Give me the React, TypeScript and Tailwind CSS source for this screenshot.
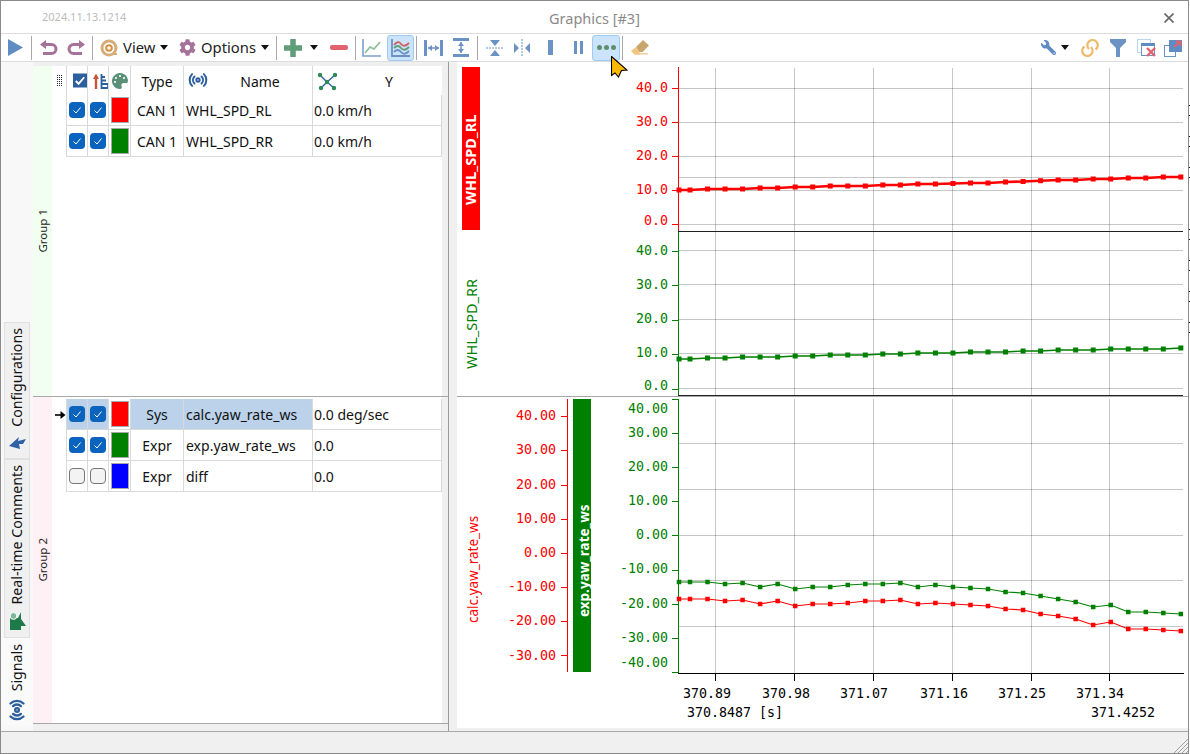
import React from "react";
import { FaCog, FaWrench, FaPalette } from "react-icons/fa";
import { Radio } from "lucide-react";

const XS = [679, ...Array.from({ length: 29 }, (_, i) => 690 + i * 17.53)];
const R1 = [190,190,189,189,189,188,188,187,187,186,186,186,185,185,184,184,183.5,183,183,182,181.5,180.7,180,180,179,179,178,178,177,177];
const G1 = [359,359,358,358,357,357,357,356,356,355,355,355,354,354,353,353,353,352,352,352,351,351,350,350,350,349,349,349,349,348];
const G3 = [582,582,582,584,583,587,584,589,587,587,585,584,584,583,587,585,587,588,589,592,593,596,599,602,607,605,612,612,613,614];
const R3 = [599,599,599,601,600,604,601,606,604,604,603,601,601,600,604,603,604,605,606,609,610,614,616,619,625,622,629,629,630,631];
const VX = [715, 794, 873, 952, 1031, 1109];
const GRID = "rgba(0,0,0,0.22)";
const RED = "#ff0000";
const GREEN = "#008000";
const MONO = "font-['DejaVu_Sans_Mono',monospace] text-[13.3px]";

function Series({ ys, color, w, m = 5 }: { ys: number[]; color: string; w: number; m?: number }) {
  return (
    <g>
      <polyline points={XS.map((x, i) => `${x},${ys[i]}`).join(" ")} fill="none" stroke={color} strokeWidth={w} />
      {XS.map((x, i) => (
        <rect key={i} x={x - m / 2} y={ys[i] - m / 2} width={m} height={m} fill={color} />
      ))}
    </g>
  );
}

function Grid({ ys, y1, y2 }: { ys: number[]; y1: number; y2: number }) {
  return (
    <g stroke={GRID} strokeWidth="1">
      {VX.map((x) => (
        <line key={x} x1={x + 0.5} x2={x + 0.5} y1={y1} y2={y2} />
      ))}
      {ys.map((y) => (
        <line key={y} x1={678} x2={1183} y1={y + 0.5} y2={y + 0.5} />
      ))}
    </g>
  );
}

function YAxis({ x, y1, y2, color, ticks, labels, right }: { x: number; y1: number; y2: number; color: string; ticks: number[]; labels: [string, number][]; right: number }) {
  return (
    <g>
      <line x1={x + 0.5} x2={x + 0.5} y1={y1} y2={y2} stroke={color} strokeWidth="1" />
      {ticks.map((t) => (
        <line key={t} x1={x - 6} x2={x} y1={t + 0.5} y2={t + 0.5} stroke={color} strokeWidth="1" />
      ))}
      {labels.map(([s, y]) => (
        <text key={s} x={right} y={y + 5} textAnchor="end" fill={color} className={MONO}>
          {s}
        </text>
      ))}
    </g>
  );
}

function Plot1() {
  return (
    <svg viewBox="457 67 731 165" className="block w-[731px] h-[165px] shrink-0">
      <Grid ys={[88, 122, 156, 177, 190, 224]} y1={68} y2={231} />
      <YAxis x={678} y1={67} y2={231} color={RED} ticks={[88, 122, 156, 190, 224]} right={668}
        labels={[["40.0", 87], ["30.0", 121], ["20.0", 155], ["10.0", 189], ["0.0", 220]]} />
      <rect x={462} y={67} width={18} height={163} fill={RED} />
      <text transform="rotate(-90 476 205)" x={476} y={205} fill="#fff" className="font-['Noto_Sans',sans-serif] text-[14.5px] font-bold">WHL_SPD_RL</text>
      <Series ys={R1} color={RED} w={2.6} />
      <line x1={678} x2={1183} y1={231.5} y2={231.5} stroke="#222" strokeWidth="1" />
    </svg>
  );
}

function Plot2() {
  return (
    <svg viewBox="457 232 731 164" className="block w-[731px] h-[164px] shrink-0">
      <Grid ys={[250, 284, 319, 353, 388]} y1={232} y2={395} />
      <YAxis x={678} y1={232} y2={395} color={GREEN} ticks={[251, 285, 320, 354, 389]} right={668}
        labels={[["40.0", 250], ["30.0", 284], ["20.0", 318], ["10.0", 352], ["0.0", 385]]} />
      <text transform="rotate(-90 477 369)" x={477} y={369} fill={GREEN} className="font-['Noto_Sans',sans-serif] text-[14.5px]">WHL_SPD_RR</text>
      <Series ys={G1} color={GREEN} w={1.4} />
      <line x1={678} x2={1183} y1={395.5} y2={395.5} stroke="#222" strokeWidth="1" />
    </svg>
  );
}

function Plot3() {
  return (
    <svg viewBox="457 399 731 329" className="block w-[731px] h-[329px] shrink-0">
      <Grid ys={[443, 489, 535, 580, 626]} y1={399} y2={673} />
      <YAxis x={567} y1={399} y2={672} color={RED} ticks={[416, 450, 485, 519, 553, 587, 621, 655]} right={556}
        labels={[["40.00", 415], ["30.00", 449], ["20.00", 484], ["10.00", 518], ["0.00", 552], ["-10.00", 586], ["-20.00", 620], ["-30.00", 655]]} />
      <rect x={573} y={399} width={18} height={273} fill={GREEN} />
      <text transform="rotate(-90 589 617)" x={589} y={617} fill="#fff" className="font-['Noto_Sans',sans-serif] text-[13.5px] font-bold">exp.yaw_rate_ws</text>
      <text transform="rotate(-90 478 623)" x={478} y={623} fill={RED} className="font-['Noto_Sans',sans-serif] text-[13.5px]">calc.yaw_rate_ws</text>
      <YAxis x={678} y1={399} y2={673} color={GREEN} ticks={[399, 433, 467, 501, 535, 570, 604, 638, 672]} right={668}
        labels={[["40.00", 408], ["30.00", 432], ["20.00", 466], ["10.00", 500], ["0.00", 534], ["-10.00", 568], ["-20.00", 603], ["-30.00", 637], ["-40.00", 662]]} />
      <Series ys={G3} color={GREEN} w={1.2} m={4.5} />
      <Series ys={R3} color={RED} w={1.2} m={4.5} />
      <line x1={678} x2={1184} y1={673.5} y2={673.5} stroke="#000" strokeWidth="1" />
      {VX.map((x) => (
        <line key={x} x1={x + 0.5} x2={x + 0.5} y1={673} y2={681} stroke="#000" strokeWidth="1" />
      ))}
      {[["370.89", 683], ["370.98", 762], ["371.07", 840], ["371.16", 920], ["371.25", 998], ["371.34", 1076]].map(([s, x]) => (
        <text key={s as string} x={x as number} y={698} fill="#000" className={MONO}>{s}</text>
      ))}
      <text x={687} y={717} fill="#000" className={MONO}>370.8487 [s]</text>
      <text x={1091} y={717} fill="#000" className={MONO}>371.4252</text>
    </svg>
  );
}

function Check({ on }: { on: boolean }) {
  return on ? (
    <div className="w-4 h-4 rounded-[4px] bg-[#0a63bd] flex items-center justify-center">
      <svg viewBox="0 0 16 16" className="w-4 h-4">
        <path d="M4.5 8.5 L7 11 L11.5 5.5" fill="none" stroke="#fff" strokeWidth="1" />
      </svg>
    </div>
  ) : (
    <div className="w-4 h-4 rounded-[4px] bg-[#f3f3f3] border border-[#777]" />
  );
}

const CELL = "border-r border-b border-[#d9d9d9] flex items-center";

function Row({ on, color, type, name, val, sel }: { on: boolean; color: string; type: string; name: string; val: string; sel?: boolean }) {
  const bg = sel ? "bg-[#bbd2ea]" : "bg-white";
  return (
    <div className="flex h-[31px] w-[390px]">
      <div className="w-[14px] flex items-center justify-center">
        {sel && (
          <svg viewBox="0 0 11 10" className="w-[11px] h-[10px] ml-[2px]">
            <path d="M0 5 H8" stroke="#000" strokeWidth="1.6" />
            <path d="M5.5 1 L10.5 5 L5.5 9 Z" fill="#000" />
          </svg>
        )}
      </div>
      <div className="border-l border-[#d9d9d9] grid grid-cols-[21px_21px_22px_53px_129px_129px] w-[376px]">
        <div className={`${CELL} ${bg} justify-center`}><Check on={on} /></div>
        <div className={`${CELL} ${bg} justify-center`}><Check on={on} /></div>
        <div className={`${CELL} justify-center bg-white`}>
          <div className="w-[18px] h-[26px] border border-[#a8a8a8]" style={{ backgroundColor: color }} />
        </div>
        <div className={`${CELL} ${bg} justify-center pt-px`}>{type}</div>
        <div className={`${CELL} ${bg} pl-[2px] pt-px`}>{name}</div>
        <div className={`${CELL} pl-px pt-px`}>{val}</div>
      </div>
    </div>
  );
}

function Header() {
  return (
    <div className="flex h-[29px] w-[390px]">
      <div className="w-[14px] flex items-center justify-center">
        <svg viewBox="0 0 6 12" className="w-[6px] h-[12px] ml-[1px]">
          {[0.5, 2.5, 4.5, 6.5, 8.5, 10.5].map((y) => (
            <line key={y} x1="0" x2="6" y1={y} y2={y} stroke="#222" strokeDasharray="1 1" />
          ))}
        </svg>
      </div>
      <div className="border-l border-[#d9d9d9] grid grid-cols-[21px_21px_22px_53px_129px_129px] w-[376px]">
        <div className="border-r border-[#d9d9d9] flex items-center pl-[6px]">
          <svg viewBox="0 0 15 15" className="w-[15px] h-[15px]">
            <rect width="15" height="15" fill="#2c5f9e" />
            <path d="M3 8 L6 11 L12 4" fill="none" stroke="#fff" strokeWidth="2" />
          </svg>
        </div>
        <div className="border-r border-[#d9d9d9] flex items-center pl-[5px]">
          <svg viewBox="0 0 15 16" className="w-[15px] h-[16px]">
            <path d="M3 16 V5" stroke="#c8553d" strokeWidth="2.4" />
            <path d="M0 6 L3 0.5 L6 6 Z" fill="#c8553d" />
            <path d="M8.5 1 V15 H15 V11 M8.5 4 H12 M8.5 7.5 H13 M8.5 11 H15" fill="none" stroke="#2c5f9e" strokeWidth="1.8" />
          </svg>
        </div>
        <div className="border-r border-[#d9d9d9] flex items-center justify-center">
          <FaPalette size={16} color="#5a9078" />
        </div>
        <div className="border-r border-[#d9d9d9] flex items-center justify-center pt-[2px]">Type</div>
        <div className="border-r border-[#d9d9d9] flex items-center relative justify-center pl-[24px] pt-[2px]">
          <span className="absolute left-[4px] top-[4px]"><Radio size={20} color="#2c5f9e" strokeWidth={2.4} /></span>
          Name
        </div>
        <div className="border-r border-transparent flex items-center relative justify-center pl-[24px] pt-[2px]">
          <svg viewBox="0 0 21 19" className="absolute left-[4px] top-[6px] w-[21px] h-[19px]">
            <path d="M3 3 L10 10 L18 3 M10 10 L4 16 M10 10 L17 16" stroke="#2c5f9e" strokeWidth="1.4" fill="none" />
            {[[3, 3], [18, 3], [10, 10], [4, 16], [17, 16]].map(([x, y]) => (
              <circle key={`${x}-${y}`} cx={x} cy={y} r="2.2" fill="#2f8a5a" />
            ))}
          </svg>
          Y
        </div>
      </div>
    </div>
  );
}

function Sep({ className }: { className: string }) {
  return <div className={`w-px h-[24px] bg-[#a8a8a8] shrink-0 ${className}`} />;
}

function Caret() {
  return (
    <svg viewBox="0 0 8 5" className="w-2 h-[5px] shrink-0">
      <path d="M0 0 H8 L4 5 Z" fill="#111" />
    </svg>
  );
}

function Btn({ className, children }: { className: string; children?: React.ReactNode }) {
  return <div className={`h-[26px] flex items-center justify-center shrink-0 ${className}`}>{children}</div>;
}

const ACTIVE = "bg-[#cce4fb] border border-[#9ccbf5] rounded-[3px]";
const BLUE = "#6a93c4";

function Toolbar() {
  return (
    <div className="relative h-[28px] shrink-0 border-b border-[#dcdcdc] flex items-center pr-[2px] text-[14.8px] text-[#222]">
      <Btn className="w-[29px]">
        <svg viewBox="0 0 15 17" className="w-[15px] h-[17px]"><path d="M0 0 L15 8.5 L0 17 Z" fill="#5f8cc2" /></svg>
      </Btn>
      <Sep className="ml-px" />
      <Btn className="w-[27px] ml-[3px]">
        <svg viewBox="0 0 18 16" className="w-[18px] h-4">
          <path d="M4 4.5 H11.5 A4.5 4.5 0 0 1 11.5 13.5 H3" fill="none" stroke="#a5729a" strokeWidth="3" />
          <path d="M0 4.5 L6 0 V9 Z" fill="#a5729a" />
        </svg>
      </Btn>
      <Btn className="w-[27px]">
        <svg viewBox="0 0 18 16" className="w-[18px] h-4">
          <path d="M14 4.5 H6.5 A4.5 4.5 0 0 0 6.5 13.5 H15" fill="none" stroke="#a5729a" strokeWidth="3" />
          <path d="M18 4.5 L12 0 V9 Z" fill="#a5729a" />
        </svg>
      </Btn>
      <Sep className="ml-[3px]" />
      <div className="ml-[7px] w-[70px] flex items-center gap-[5px] shrink-0">
        <svg viewBox="0 0 18 18" className="w-[18px] h-[18px] shrink-0">
          <circle cx="9" cy="9" r="7" fill="none" stroke="#d6ad78" strokeWidth="3" />
          <circle cx="9" cy="9" r="2.8" fill="none" stroke="#d98f3e" strokeWidth="2" />
          <path d="M12 15 L17 15" stroke="#d6ad78" strokeWidth="2" />
        </svg>
        <span>View</span>
        <Caret />
      </div>
      <div className="ml-[9px] w-[90px] flex items-center gap-[5px] shrink-0">
        <FaCog size={17} color="#a5729a" className="shrink-0" />
        <span>Options</span>
        <Caret />
      </div>
      <Sep className="ml-[7px]" />
      <Btn className="w-[18px] ml-[7px]">
        <svg viewBox="0 0 18 18" className="w-[18px] h-[18px]">
          <path d="M9 0 V18 M0 9 H18" stroke="#5f9e78" strokeWidth="5.5" />
        </svg>
      </Btn>
      <Btn className="w-[8px] ml-[8px]"><Caret /></Btn>
      <Btn className="w-[18px] ml-[12px]"><div className="w-[18px] h-[5px] rounded-[2px] bg-[#e2626f]" /></Btn>
      <Sep className="ml-[7px]" />
      <Btn className="w-[26px] ml-[3px]">
        <svg viewBox="0 0 20 20" className="w-5 h-5">
          <path d="M1 1 V18 H19" fill="none" stroke="#7ba0cc" strokeWidth="1.6" />
          <path d="M3 15 L8 9 L12 11 L18 4" fill="none" stroke="#8fbf9c" strokeWidth="1.8" />
        </svg>
      </Btn>
      <Btn className={`w-[27px] ml-[2px] ${ACTIVE}`}>
        <svg viewBox="0 0 20 20" className="w-5 h-5">
          <path d="M1 1 V18 H19" fill="none" stroke="#6a93c4" strokeWidth="1.8" />
          <path d="M3 7 Q7 2 10 6 T18 5" fill="none" stroke="#cf5f5f" strokeWidth="1.8" />
          <path d="M3 10 Q7 6 10 10 T18 9" fill="none" stroke="#5f9e78" strokeWidth="1.8" />
          <path d="M3 14 Q7 10 10 14 T18 13" fill="none" stroke="#6a93c4" strokeWidth="1.8" />
        </svg>
      </Btn>
      <Sep className="ml-[2px]" />
      <Btn className="w-[27px] ml-[3px]">
        <svg viewBox="0 0 19 16" className="w-[19px] h-4">
          <path d="M1.5 0 V16 M17.5 0 V16" stroke={BLUE} strokeWidth="3" />
          <path d="M4 8 H15" stroke={BLUE} strokeWidth="1.5" />
          <path d="M4 8 L8 5 V11 Z M15 8 L11 5 V11 Z" fill={BLUE} />
        </svg>
      </Btn>
      <Btn className="w-[27px]">
        <svg viewBox="0 0 16 19" className="w-4 h-[19px]">
          <path d="M0 1.5 H16 M0 17.5 H16" stroke={BLUE} strokeWidth="3" />
          <path d="M8 4 V15" stroke={BLUE} strokeWidth="1.5" />
          <path d="M8 4 L5 8 H11 Z M8 15 L5 11 H11 Z" fill={BLUE} />
        </svg>
      </Btn>
      <Sep className="ml-[3px]" />
      <Btn className="w-[27px] ml-[3px]">
        <svg viewBox="0 0 18 18" className="w-[18px] h-[18px]">
          <path d="M0 9 H18" stroke={BLUE} strokeWidth="1" strokeDasharray="2 1" />
          <path d="M4 1 H14 L9 7 Z M4 17 H14 L9 11 Z" fill={BLUE} />
        </svg>
      </Btn>
      <Btn className="w-[27px]">
        <svg viewBox="0 0 18 18" className="w-[18px] h-[18px]">
          <path d="M9 0 V18" stroke={BLUE} strokeWidth="1" strokeDasharray="2 1" />
          <path d="M1 4 V14 L6 9 Z M17 4 V14 L12 9 Z" fill={BLUE} />
        </svg>
      </Btn>
      <Btn className="w-[28px] ml-px"><div className="w-[5px] h-[15px] bg-[#6a93c4]" /></Btn>
      <Btn className="w-[28px] gap-[3px]">
        <div className="w-[3px] h-[13px] bg-[#6a93c4]" />
        <div className="w-[3px] h-[13px] bg-[#6a93c4]" />
      </Btn>
      <Btn className={`w-[28px] gap-[2px] ${ACTIVE}`}>
        <div className="w-[5px] h-[5px] rounded-full bg-[#5f8f70]" />
        <div className="w-[5px] h-[5px] rounded-full bg-[#5f8f70]" />
        <div className="w-[5px] h-[5px] rounded-full bg-[#5f8f70]" />
      </Btn>
      <Sep className="ml-[2px]" />
      <Btn className="w-[26px] ml-[4px]">
        <svg viewBox="0 0 18 15" className="w-[18px] h-[15px]">
          <path d="M5 7 L12 0 L18 5.5 L11.5 12 H8 Z" fill="#c9a66b" />
          <path d="M0 11 L5 7 L8.5 12 V14.5 H3.5 Z" fill="#f0c684" />
          <path d="M3.5 13.2 H17 V14.5 H3.5 Z" fill="#f0c684" />
        </svg>
      </Btn>
      <div className="ml-auto flex items-center">
        <Btn className="w-[20px]"><span className="-scale-x-100"><FaWrench size={15} color="#5f8cc2" /></span></Btn>
        <Btn className="w-[8px] ml-[3px]"><Caret /></Btn>
        <Btn className="w-[26px] ml-[8px]">
          <svg viewBox="0 0 18 18" className="w-[18px] h-[18px]">
            <path d="M8 10 A5.2 5.2 0 1 1 14.5 10.5" fill="none" stroke="#eebb6c" strokeWidth="2.2" />
            <path d="M10 8 A5.2 5.2 0 1 1 3.5 7.5" fill="none" stroke="#eebb6c" strokeWidth="2.2" />
          </svg>
        </Btn>
        <Btn className="w-[28px] ml-px">
          <svg viewBox="0 0 16 18" className="w-4 h-[18px]"><path d="M0 0 H16 V3 L10 9 V18 H6 V9 L0 3 Z" fill="#6a93c4" /></svg>
        </Btn>
        <Btn className="w-[28px]">
          <svg viewBox="0 0 19 18" className="w-[19px] h-[18px]">
            <rect x="0.5" y="0.5" width="13" height="13" fill="none" stroke="#bcd6f2" />
            <rect x="4.5" y="4.5" width="13" height="12" fill="#fff" stroke="#6a93c4" />
            <rect x="4" y="4" width="14" height="3" fill="#5f8cc2" />
            <path d="M10 9 L18 17 M18 9 L10 17" stroke="#e2626f" strokeWidth="2.4" />
          </svg>
        </Btn>
        <Btn className="w-[26px]">
          <svg viewBox="0 0 18 18" className="w-[18px] h-[18px]">
            <rect x="0.5" y="6.5" width="11" height="11" fill="#fff" stroke="#6a93c4" />
            <rect x="5" y="1" width="13" height="12" fill="#5f8cc2" />
            <path d="M10 8 L16 3 M12 2.5 H16.5 V7" fill="none" stroke="#e2626f" strokeWidth="2" />
          </svg>
        </Btn>
      </div>
      <svg viewBox="0 0 17 22" className="absolute left-[610px] top-[22px] w-[17px] h-[22px] z-10">
        <path d="M0.5 0.5 L16 14 L10.5 14.5 L7.5 21 L4 17 L0.5 19.5 Z" fill="#fdb900" stroke="#000" strokeWidth="1.1" />
      </svg>
    </div>
  );
}

function Tab({ label, icon, className }: { label: string; icon: React.ReactNode; className: string }) {
  return (
    <div className={`flex flex-col items-center ${className}`}>
      <span className="[writing-mode:vertical-rl] rotate-180 text-[14.2px] leading-none text-[#111]">{label}</span>
      <div className="flex-1 flex items-center justify-center">{icon}</div>
    </div>
  );
}

function Tabs() {
  return (
    <div className="w-[32px] shrink-0 flex flex-col justify-end bg-[#f8f8f8] pb-[6px]">
      <Tab
        label="Configurations"
        className="h-[137px] w-[26px] ml-[3px] pt-[5px] bg-[#f0f0f0] border border-[#e0e0e0]"
        icon={
          <svg viewBox="0 0 17 13" className="w-[17px] h-[13px]">
            <path d="M0 10 L10 1 L9 5 L17 3 L14 8 L10 8 L11 13 Z" fill="#2f62a5" />
          </svg>
        }
      />
      <Tab
        label="Real-time Comments"
        className="h-[179px] w-[26px] ml-[3px] pt-[5px] bg-[#f0f0f0] border border-[#e0e0e0]"
        icon={
          <svg viewBox="0 0 17 18" className="w-[17px] h-[18px]">
            <path d="M1 6 H9 L12 0 V7 L17 14 L12 14 V18 H1 Z" fill="#1f7a4a" />
            <circle cx="4.5" cy="4" r="3.4" fill="#7fb59a" stroke="#fff" strokeWidth="1" />
          </svg>
        }
      />
      <Tab
        label="Signals"
        className="h-[87px] w-[32px] pt-[6px] bg-[#fafafa]"
        icon={<span className="rotate-90 mt-[4px]"><Radio size={22} color="#2c5f9e" strokeWidth={2.6} /></span>}
      />
    </div>
  );
}

function GroupLabel({ text, className }: { text: string; className: string }) {
  return (
    <div className={`w-[19px] shrink-0 flex items-center ${className}`}>
      <span className="[writing-mode:vertical-rl] rotate-180 text-[11.5px] leading-none text-[#222] ml-[4px]">{text}</span>
    </div>
  );
}

export default function App() {
  return (
    <div className="w-[1190px] h-[754px] flex bg-white font-['Noto_Sans',sans-serif] text-[14px] text-[#111] overflow-hidden">
      <div className="w-[1189px] h-[754px] border border-[#8a8a8a] flex flex-col shrink-0">
        <div className="h-[33px] shrink-0 border-b border-[#dcdcdc] grid grid-cols-[1fr_auto_1fr] items-center">
          <div className="pl-[41px] text-[11px] text-[#bcbcbc]">2024.11.13.1214</div>
          <div className="text-[14.5px] text-[#8a8a8a] pt-[3px]">Graphics [#3]</div>
          <div className="flex justify-end pr-[14px] pt-px">
            <svg viewBox="0 0 10 10" className="w-[10px] h-[10px]">
              <path d="M0.5 0.5 L9.5 9.5 M9.5 0.5 L0.5 9.5" stroke="#666" strokeWidth="1.6" />
            </svg>
          </div>
        </div>
        <Toolbar />
        <div className="h-[669px] shrink-0 flex bg-[#f0f0f0]">
          <Tabs />
          <div className="w-[416px] shrink-0 border-r border-[#9a9a9a] flex flex-col pt-[4px]">
            <div className="h-[330px] flex shrink-0">
              <GroupLabel text="Group 1" className="bg-[#f0fff0]" />
              <div className="w-[390px] bg-white">
                <Header />
                <Row on color="#ff0000" type="CAN 1" name="WHL_SPD_RL" val="0.0 km/h" />
                <Row on color="#008000" type="CAN 1" name="WHL_SPD_RR" val="0.0 km/h" />
              </div>
            </div>
            <div className="h-px bg-[#a8a8a8] shrink-0" />
            <div className="h-[326px] flex shrink-0">
              <GroupLabel text="Group 2" className="bg-[#fff0f5]" />
              <div className="w-[390px] bg-white pt-[2px]">
                <Row on sel color="#ff0000" type="Sys" name="calc.yaw_rate_ws" val="0.0 deg/sec" />
                <Row on color="#008000" type="Expr" name="exp.yaw_rate_ws" val="0.0" />
                <Row on={false} color="#0000ff" type="Expr" name="diff" val="0.0" />
              </div>
            </div>
            <div className="h-px bg-[#a8a8a8] shrink-0" />
          </div>
          <div className="w-[8px] shrink-0" />
          <div className="w-[731px] shrink-0">
            <div className="bg-white h-[666px] pt-[5px] flex flex-col">
              <Plot1 />
              <Plot2 />
              <div className="h-px bg-[#a8a8a8] shrink-0" />
              <div className="h-[2px] shrink-0" />
              <Plot3 />
            </div>
          </div>
        </div>
        <div className="flex-1 border-t border-[#a8a8a8] bg-[#f0f0f0] flex justify-end items-end">
          <svg viewBox="0 0 14 14" className="w-[14px] h-[14px]">
            <path d="M0 14 L14 0 M4 14 L14 4 M8 14 L14 8 M12 14 L14 12" stroke="#a0a0a0" strokeWidth="1" />
          </svg>
        </div>
      </div>
      <svg viewBox="0 0 1 754" className="w-px h-[754px] shrink-0">
        {[105, 115, 136, 146, 167, 177, 229, 239, 260, 270, 291, 301, 322, 332].map((y) => (
          <rect key={y} x="0" y={y} width="1" height="1" fill="#111" />
        ))}
      </svg>
    </div>
  );
}
